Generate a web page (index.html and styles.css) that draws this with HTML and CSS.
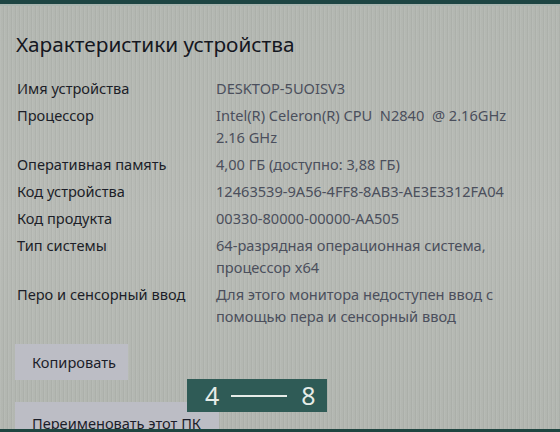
FILE: index.html
```html
<!DOCTYPE html>
<html lang="ru">
<head>
<meta charset="utf-8">
<link rel="stylesheet" href="styles.css">
</head>
<body>
<div class="screen">
  <div class="topbar"></div>
  <div class="topline"></div>
  <main class="content">
    <h1 class="title">Характеристики устройства</h1>
    <div class="specs">
      <div class="label">Имя устройства</div>
      <div class="value">DESKTOP-5UOISV3</div>
      <div class="label">Процессор</div>
      <div class="value">Intel(R) Celeron(R) CPU&nbsp; N2840&nbsp; @ 2.16GHz<br>2.16 GHz</div>
      <div class="label">Оперативная память</div>
      <div class="value">4,00 ГБ (доступно: 3,88 ГБ)</div>
      <div class="label">Код устройства</div>
      <div class="value">12463539-9A56-4FF8-8AB3-AE3E3312FA04</div>
      <div class="label">Код продукта</div>
      <div class="value">00330-80000-00000-AA505</div>
      <div class="label">Тип системы</div>
      <div class="value">64-разрядная операционная система,<br>процессор x64</div>
      <div class="label">Перо и сенсорный ввод</div>
      <div class="value">Для этого монитора недоступен ввод с<br>помощью пера и сенсорный ввод</div>
    </div>
    <button class="btn copy">Копировать</button>
    <button class="btn rename">Переименовать этот ПК</button>
  </main>
  <div class="bottombar"></div>
  <div class="badge"><span>4</span><span class="dash"></span><span>8</span></div>
</div>
</body>
</html>
```
FILE: styles.css
```css
html, body {
  margin: 0;
  padding: 0;
}
body {
  width: 560px;
  height: 432px;
  overflow: hidden;
  background: #b4b8b2;
  font-family: "Noto Sans", "Open Sans", sans-serif;
}
.screen {
  position: relative;
  width: 560px;
  height: 432px;
  overflow: hidden;
  background:
    repeating-linear-gradient(90deg, rgba(255,255,255,0.06) 0 1px, rgba(0,0,0,0) 1px 3px, rgba(0,0,0,0.04) 3px 4px),
    linear-gradient(180deg, #b3b7b1 0%, #b8bbb6 50%, #b2b6b0 100%);
  display: flex;
  flex-direction: column;
}
.topbar {
  height: 4px;
  background: #1d4442;
  flex: none;
}
.topline {
  height: 2px;
  background: #a9b4af;
  flex: none;
}
.content {
  flex: 1;
  padding: 0 0 0 15px;
  display: flex;
  flex-direction: column;
  align-items: flex-start;
}
.title {
  margin: 24px 0 0 1px;
  font-size: 20.8px;
  line-height: 28px;
  font-weight: 400;
  color: #15171f;
}
.specs {
  margin-top: 19px;
  display: grid;
  grid-template-columns: 200px 1fr;
  row-gap: 5px;
  font-size: 14.6px;
  line-height: 22px;
}
.label {
  padding-left: 2px;
  color: #1c1e28;
}
.value {
  padding-left: 1px;
  color: #4b4f5c;
}
.btn {
  font-family: inherit;
  font-size: 14.6px;
  color: #1c1e2a;
  background: #bcbdc5;
  border: none;
  padding: 0 17px;
  text-align: left;
}
.copy {
  margin-top: 17px;
  height: 36px;
  width: 113px;
}
.rename {
  margin-top: 22px;
  height: 36px;
  width: 204px;
  padding-top: 6px;
}
.bottombar {
  position: absolute;
  left: 0;
  right: 0;
  bottom: 0;
  height: 3px;
  background: #1f4540;
}
.badge {
  position: absolute;
  left: 187px;
  top: 379px;
  width: 140px;
  height: 33px;
  box-sizing: border-box;
  padding-left: 18px;
  background: #2f5b56;
  color: #e6ece8;
  display: flex;
  align-items: center;
  font-family: "Noto Sans", sans-serif;
  font-size: 25px;
  line-height: 33px;
}
.dash {
  width: 56px;
  height: 2px;
  margin: 0 14px 0 12px;
  background: #e6ece8;
}
```
